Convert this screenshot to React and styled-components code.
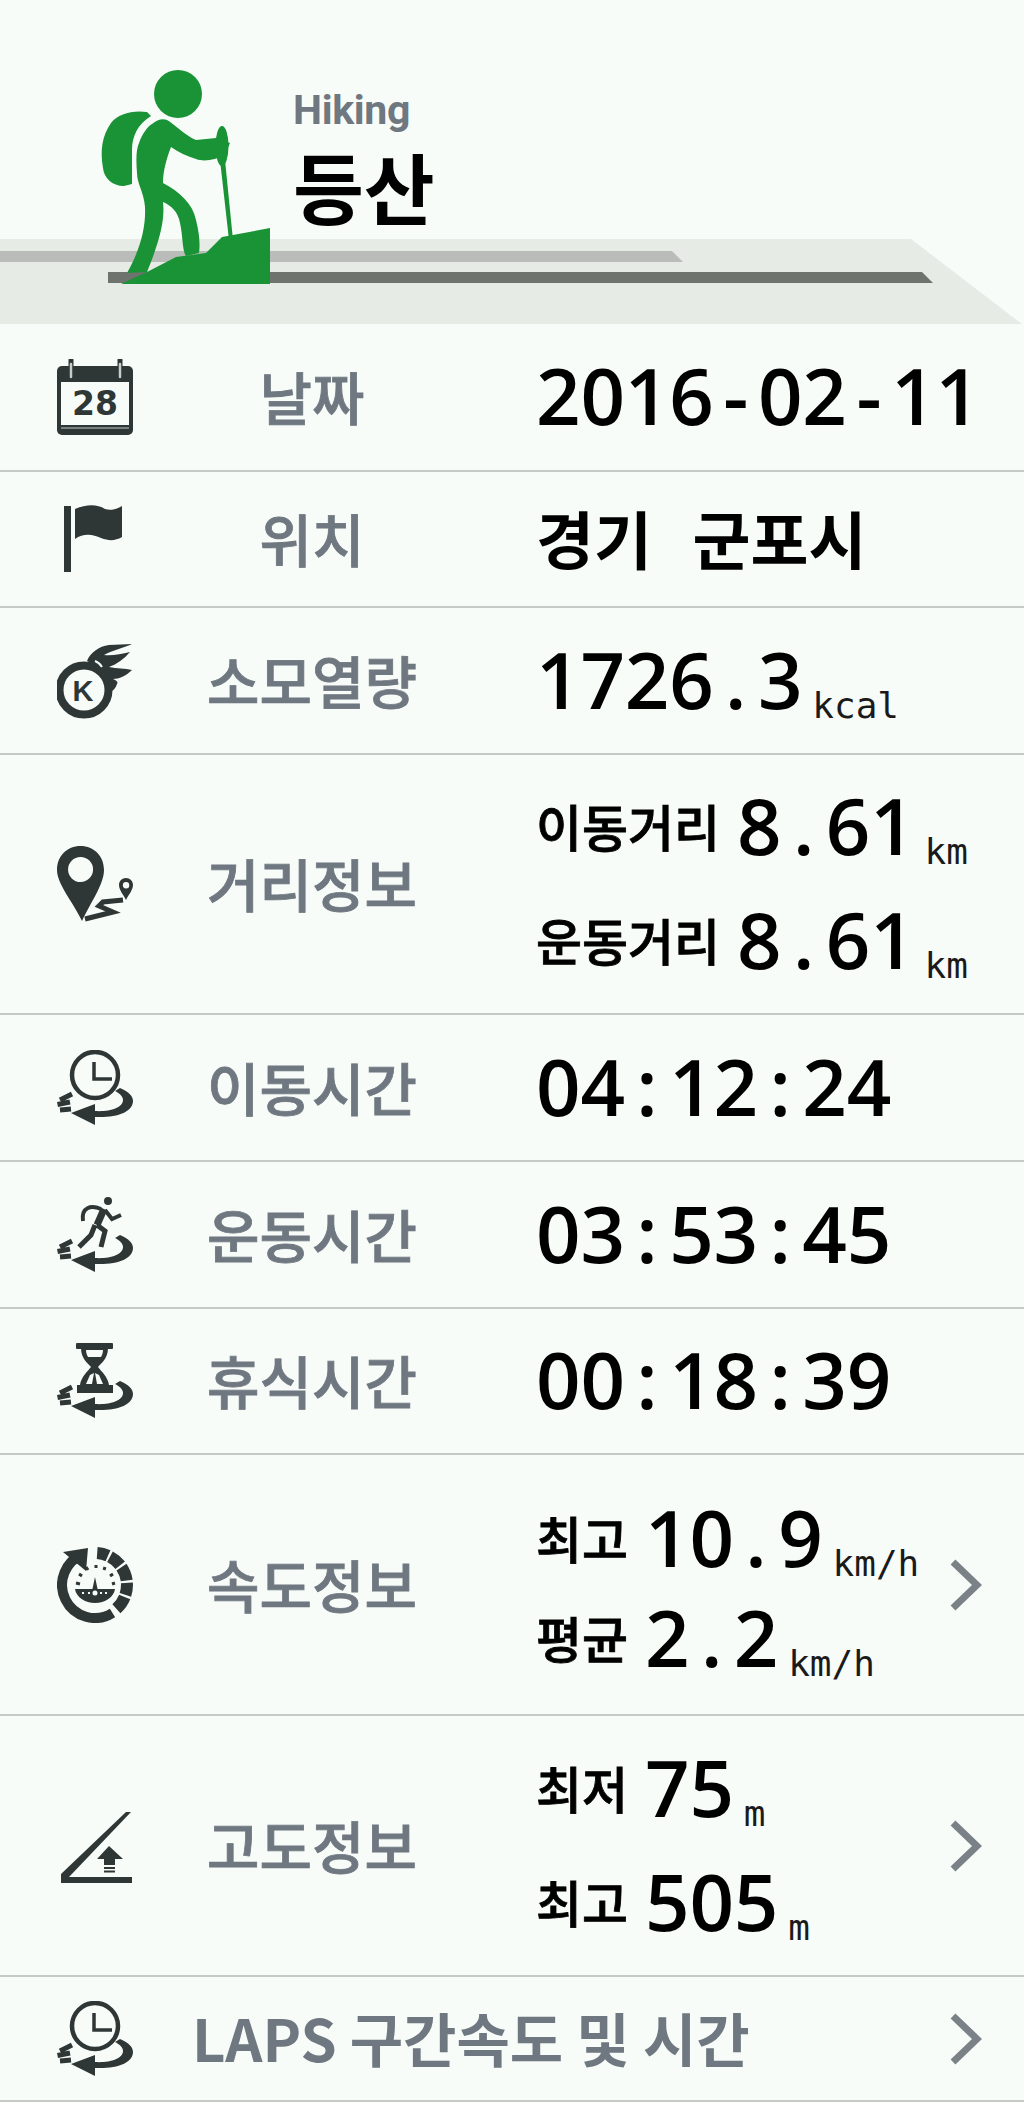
import React from "react";
import styled, { createGlobalStyle } from "styled-components";

const GlobalStyle = createGlobalStyle`
  html, body {
    margin: 0;
    padding: 0;
    background: #f8fcf8;
  }
`;

const Page = styled.div`
  width: 1024px;
  height: 2102px;
  overflow: hidden;
  background: #f8fcf8;
  font-family: "Noto Sans CJK KR", "Noto Sans", sans-serif;
`;

const Header = styled.header`
  position: relative;
  height: 324px;
  display: flex;
  align-items: flex-start;
  padding: 70px 0 0 100px;
  box-sizing: border-box;
`;

const Road = styled.svg`
  position: absolute;
  left: 0;
  top: 239px;
  width: 1024px;
  height: 85px;
`;

const Hiker = styled.svg`
  position: relative;
  width: 172px;
  height: 216px;
  flex: none;
`;

const Titles = styled.div`
  position: relative;
  margin: 15px 0 0 21px;
  display: flex;
  flex-direction: column;
`;

const Sub = styled.div`
  font-family: "Roboto", sans-serif;
  font-weight: 700;
  font-size: 41px;
  line-height: 50px;
  letter-spacing: -0.3px;
  color: #6f7780;
`;

const Title = styled.div`
  font-weight: 700;
  font-size: 77px;
  line-height: 90px;
  margin-top: 6px;
  color: #000;
`;

const Row = styled.div`
  height: ${(p) => p.$h}px;
  box-sizing: border-box;
  border-bottom: 2px solid #c6cac5;
  padding-left: 57px;
  display: flex;
  align-items: center;
`;

const IconBox = styled.svg`
  width: 76px;
  height: 76px;
  flex: none;
  color: #2f3636;
`;

const Label = styled.div`
  width: 358px;
  flex: none;
  text-align: center;
  font-weight: 500;
  font-size: 57px;
  line-height: 70px;
  margin-bottom: 4px;
  color: #6f7780;
  -webkit-text-stroke: 0.8px #6f7780;
`;

const Values = styled.div`
  margin-left: 45px;
  flex: 1;
  display: flex;
  flex-direction: column;
  padding-top: ${(p) => p.$drop || 0}px;
  margin-bottom: 4px;
`;

const ValueLine = styled.div`
  display: flex;
  align-items: baseline;
  height: ${(p) => p.$pitch}px;
  line-height: ${(p) => p.$pitch}px;
  color: #000;
`;

const Word = styled.span`
  font-weight: 700;
  font-size: 63px;
  white-space: pre;
  word-spacing: 6px;
`;

const SmallWord = styled.span`
  font-weight: 500;
  font-size: 50px;
  margin-right: 17px;
  color: #000;
  -webkit-text-stroke: 0.8px #000;
  transform: translateY(-8px);
`;

const Cell = styled.span`
  display: inline-block;
  width: 44.4px;
  text-align: center;
  font-family: "Open Sans", sans-serif;
  font-weight: 600;
  font-size: 78px;
`;

const Unit = styled.span`
  margin-left: 10px;
  font-family: "DejaVu Sans Mono", monospace;
  font-size: 36px;
  color: #1a1a1a;
  transform: translateY(9px);
`;

const Chevron = styled.svg`
  width: 34px;
  height: 52px;
  flex: none;
  margin-right: 42px;
`;

const LapsLabel = styled.div`
  flex: 1;
  margin: 0 0 4px 59px;
  font-weight: 700;
  font-size: 58px;
  line-height: 70px;
  color: #6f7780;
`;

const Mono = ({ text }) => (
  <span>
    {text.split("").map((c, i) => (
      <Cell key={i}>{c}</Cell>
    ))}
  </span>
);

const Arrow = () => (
  <Chevron viewBox="0 0 34 52">
    <path d="M5 3 L29 26 L5 49" fill="none" stroke="#7a8288" strokeWidth="7" />
  </Chevron>
);

const Swoosh = () => (
  <g>
    <path d="M63 38 C72 42 76 46 76 51 C76 62 60 68 38 67 L38 75 L14 63 L38 54 L38 61 C52 62 66 58 66 50 C66 46 62 43 58 41 Z" fill="currentColor" />
    <path d="M3 50 L15 44 M0.5 54.5 L13 52 M3 60 L14 59" stroke="currentColor" strokeWidth="5" fill="none" />
  </g>
);

const CalendarIcon = () => (
  <IconBox viewBox="0 0 76 76">
    <rect x="0" y="7" width="76" height="69" rx="5" fill="currentColor" />
    <rect x="4" y="23" width="68" height="43" fill="#f8fcf8" />
    <path d="M4 69 H72" stroke="#f8fcf8" strokeWidth="1.5" opacity="0.5" />
    <path d="M14 1 V17 M63 1 V17" stroke="currentColor" strokeWidth="5" strokeLinecap="round" />
    <path d="M14 5 V18 M63 5 V18" stroke="#c8ccc8" strokeWidth="2.5" strokeLinecap="round" />
    <text x="38" y="56" textAnchor="middle" fontFamily="DejaVu Sans" fontWeight="700" fontSize="33" textLength="46" lengthAdjust="spacingAndGlyphs" fill="currentColor">28</text>
  </IconBox>
);

const FlagIcon = () => (
  <IconBox viewBox="0 0 76 76">
    <rect x="7" y="5" width="7" height="66" fill="currentColor" />
    <path d="M18 8 C30 3 40 3 48 8 C54 10 60 8 65 5 V36 C58 40 52 40 44 37 C36 33 26 32 18 38 Z" fill="currentColor" />
  </IconBox>
);

const FireIcon = () => (
  <IconBox viewBox="0 0 76 76">
    <circle cx="27" cy="47" r="24.5" fill="none" stroke="currentColor" strokeWidth="8" />
    <text x="26" y="58" textAnchor="middle" fontFamily="Liberation Sans" fontWeight="700" fontSize="29" fill="currentColor">K</text>
    <path d="M30 18 C33 10 42 3 52 2 L75 1 C66 5 56 7 47 12 C55 13 64 11 73 9 C67 16 60 21 52 24 C60 26 68 25 75 27 C69 33 62 36 56 36 C61 38 61 40 60 41 C59 45 56 48 52 50 C53 44 50 40 46 36 C42 28 38 22 30 18 Z" fill="currentColor" />
    <path d="M38 18 C41 19 43 21 45 24" stroke="#f8fcf8" strokeWidth="2" fill="none" />
  </IconBox>
);

const PinIcon = () => (
  <IconBox viewBox="0 0 76 76">
    <path fillRule="evenodd" d="M23.5 0 C37 0 47 10 47 24 C47 38 34 56 25 75 C16 56 0 38 0 24 C0 10 10 0 23.5 0 Z M23.5 11 A12.5 12.5 0 1 0 23.6 36 A12.5 12.5 0 1 0 23.5 11 Z" fill="currentColor" />
    <path fillRule="evenodd" d="M69 32 C73 32 76 35 76 39 C76 44 72 48 69 54 C66 48 62 44 62 39 C62 35 65 32 69 32 Z M69 36 A3.2 3.2 0 1 0 69.1 42.4 A3.2 3.2 0 1 0 69 36 Z" fill="currentColor" />
    <path d="M28 73 L56 66 L42 60 L46 56 L66 54" fill="none" stroke="currentColor" strokeWidth="5" />
  </IconBox>
);

const ClockIcon = () => (
  <IconBox viewBox="0 0 76 76">
    <circle cx="38" cy="25" r="23" fill="none" stroke="currentColor" strokeWidth="4.5" />
    <path d="M37 12 V29 H55" fill="none" stroke="currentColor" strokeWidth="3.5" />
    <Swoosh />
  </IconBox>
);

const RunnerIcon = () => (
  <IconBox viewBox="0 0 76 76">
    <circle cx="51" cy="4" r="4" fill="currentColor" />
    <path d="M47 12 L40 28" stroke="currentColor" strokeWidth="7" fill="none" />
    <path d="M48 13 L55 22 L64 18 M44 12 C34 8 24 10 26 24" stroke="currentColor" strokeWidth="4" fill="none" />
    <path d="M40 28 L48 34 L44 50 M38 28 L34 38 L22 50" stroke="currentColor" strokeWidth="5" fill="none" />
    <Swoosh />
  </IconBox>
);

const HourglassIcon = () => (
  <IconBox viewBox="0 0 76 76">
    <rect x="19" y="0" width="37" height="6" rx="1" fill="currentColor" />
    <rect x="20" y="42" width="36" height="8" fill="currentColor" />
    <path d="M24 5 H51 C51 16 44 20 41 24 C44 28 51 34 52 42 H23 C24 34 31 28 34 24 C31 20 24 16 24 5 Z" fill="currentColor" />
    <path d="M29 7 H46 C46 10 45 12 44 14 H31 C30 12 29 10 29 7 Z M33 32 L29 41 H35 L37 30 Z M42 32 L46 41 H40 L38 30 Z" fill="#f8fcf8" />
    <Swoosh />
  </IconBox>
);

const polar = (r, deg) => {
  const a = ((deg - 90) * Math.PI) / 180;
  return `${(38 + r * Math.cos(a)).toFixed(1)} ${(38 + r * Math.sin(a)).toFixed(1)}`;
};

const segments = [
  [4, 24],
  [28, 52],
  [56, 82],
  [86, 108],
  [112, 138],
];

const SpeedIcon = () => (
  <IconBox viewBox="0 0 76 76">
    <path d={`M${polar(33, 148)} A33 33 0 1 1 ${polar(33, 340)}`} fill="none" stroke="currentColor" strokeWidth="10" />
    <path d="M6 5 L31 1 L29 24 Z" fill="currentColor" />
    {segments.map(([a, b]) => (
      <path key={a} d={`M${polar(32, a)} A32 32 0 0 1 ${polar(32, b)}`} fill="none" stroke="currentColor" strokeWidth="12" />
    ))}
    <path d="M18 42 H58 C57 50 48 56 38 56 C28 56 19 50 18 42 Z" fill="currentColor" />
    <path d="M38 30 L41 44 H35 Z" fill="currentColor" />
    <circle cx="38" cy="46" r="2.5" fill="#f8fcf8" />
    <path d="M19 36 L23 37 M22 27 L25 29 M29 20 L31 23 M39 18 V21 M48 20 L47 23 M56 27 L53 29 M58 36 L55 37" stroke="currentColor" strokeWidth="3" />
    <path d="M25 46 H27 M48 46 H50 M31 46 H33 M43 46 H45" stroke="#f8fcf8" strokeWidth="2" />
  </IconBox>
);

const SlopeIcon = () => (
  <IconBox viewBox="0 0 76 76">
    <path d="M69 4 L74 4 L12 69 H75 V75 H4 V66 Z" fill="currentColor" />
    <path d="M52 38 L66 51 H58 V57 H47 V51 H40 Z" fill="currentColor" />
    <path d="M47 60 H58 M47 63.5 H58" stroke="currentColor" strokeWidth="2" />
  </IconBox>
);

const InfoRow = ({ h, icon, label, lines, pitch = 114, drop, arrow }) => (
  <Row $h={h}>
    {icon}
    <Label>{label}</Label>
    <Values $drop={drop}>
      {lines.map((l, i) => (
        <ValueLine key={i} $pitch={pitch}>
          {l.word && <Word>{l.word}</Word>}
          {l.small && <SmallWord>{l.small}</SmallWord>}
          {l.num && <Mono text={l.num} />}
          {l.unit && <Unit>{l.unit}</Unit>}
        </ValueLine>
      ))}
    </Values>
    {arrow && <Arrow />}
  </Row>
);

export default function App() {
  return (
    <Page>
      <GlobalStyle />
      <Header>
        <Road viewBox="0 0 1024 85">
          <path d="M0 0 H911 L1022 85 H0 Z" fill="#e7ebe6" />
          <path d="M0 12 H672 L683 23 H0 Z" fill="#b9bcb8" />
          <path d="M108 33 H922 L933 44 H108 Z" fill="#6f736e" />
        </Road>
        <Hiker viewBox="100 70 172 216">
          <g fill="#1a9336">
            <circle cx="178" cy="94" r="24" />
            <path d="M147 112 L151 116 C138 124 132 136 132 150 L132 184 L124 186 C112 186 104 178 103 168 C100 150 102 136 111 123 C118 114 132 110 147 112 Z" />
            <path d="M167 120 C174 124 186 136 196 140 L216 138 L230 143 L225 155 C215 160 204 162 196 159 C186 156 178 152 171 147 C166 160 163 172 163 183 C180 192 193 204 196 220 C200 236 200 246 199 253 L186 256 C182 250 183 236 180 223 C178 212 172 206 163 202 C165 220 160 240 147 272 L127 273 C140 250 146 228 145 207 C144 192 137 184 137 173 C136 160 136 150 139 143 C142 134 148 126 152 124 C157 120 162 118 167 120 Z" />
            <ellipse cx="222" cy="146" rx="6.5" ry="20" />
            <path d="M220 160 L225 160 L233 240 L229 240 Z" />
            <path d="M121 284 L149 271 L176 257 L206 253 L222 237 L270 228 V284 Z" />
          </g>
        </Hiker>
        <Titles>
          <Sub>Hiking</Sub>
          <Title>등산</Title>
        </Titles>
      </Header>
      <InfoRow h={148} icon={<CalendarIcon />} label="날짜" lines={[{ num: "2016-02-11" }]} />
      <InfoRow h={136} icon={<FlagIcon />} label="위치" lines={[{ word: "경기  군포시" }]} />
      <InfoRow h={147} icon={<FireIcon />} label="소모열량" lines={[{ num: "1726.3", unit: "kcal" }]} />
      <InfoRow
        h={260}
        icon={<PinIcon />}
        label="거리정보"
        lines={[
          { small: "이동거리", num: "8.61", unit: "km" },
          { small: "운동거리", num: "8.61", unit: "km" },
        ]}
      />
      <InfoRow h={147} icon={<ClockIcon />} label="이동시간" lines={[{ num: "04:12:24" }]} />
      <InfoRow h={147} icon={<RunnerIcon />} label="운동시간" lines={[{ num: "03:53:45" }]} />
      <InfoRow h={146} icon={<HourglassIcon />} label="휴식시간" lines={[{ num: "00:18:39" }]} />
      <InfoRow
        h={261}
        icon={<SpeedIcon />}
        label="속도정보"
        pitch={100}
        drop={8}
        arrow
        lines={[
          { small: "최고", num: "10.9", unit: "km/h" },
          { small: "평균", num: "2.2", unit: "km/h" },
        ]}
      />
      <InfoRow
        h={261}
        icon={<SlopeIcon />}
        label="고도정보"
        arrow
        lines={[
          { small: "최저", num: "75", unit: "m" },
          { small: "최고", num: "505", unit: "m" },
        ]}
      />
      <Row $h={125}>
        <ClockIcon />
        <LapsLabel>LAPS 구간속도 및 시간</LapsLabel>
        <Arrow />
      </Row>
    </Page>
  );
}
